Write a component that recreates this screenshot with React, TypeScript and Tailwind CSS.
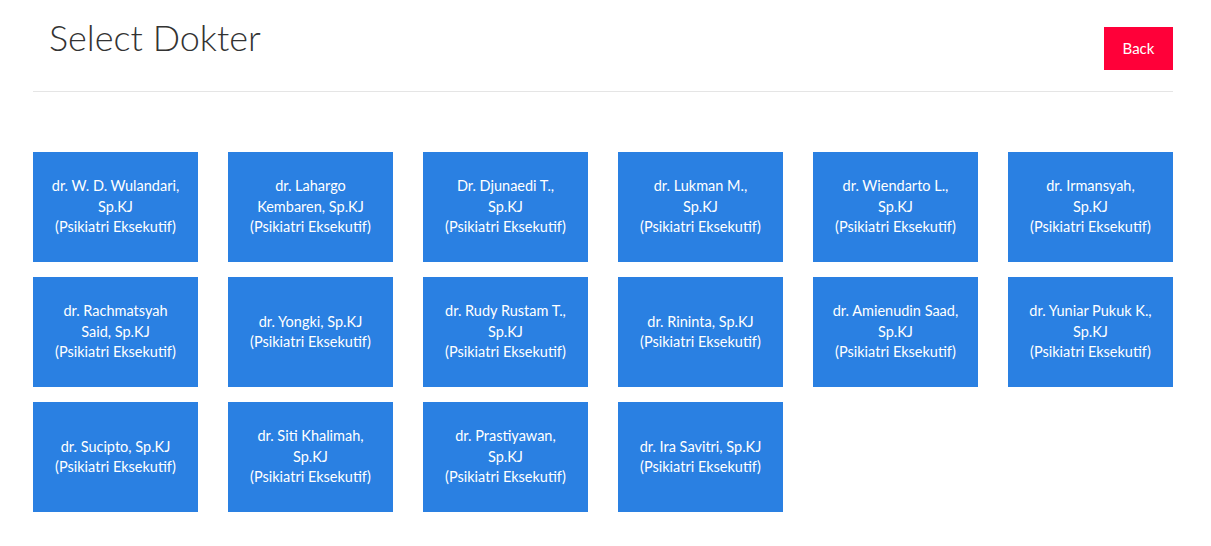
import React from "react";

const doctors: string[][] = [
  ["dr. W. D. Wulandari,", "Sp.KJ"],
  ["dr. Lahargo", "Kembaren, Sp.KJ"],
  ["Dr. Djunaedi T.,", "Sp.KJ"],
  ["dr. Lukman M.,", "Sp.KJ"],
  ["dr. Wiendarto L.,", "Sp.KJ"],
  ["dr. Irmansyah,", "Sp.KJ"],
  ["dr. Rachmatsyah", "Said, Sp.KJ"],
  ["dr. Yongki, Sp.KJ"],
  ["dr. Rudy Rustam T.,", "Sp.KJ"],
  ["dr. Rininta, Sp.KJ"],
  ["dr. Amienudin Saad,", "Sp.KJ"],
  ["dr. Yuniar Pukuk K.,", "Sp.KJ"],
  ["dr. Sucipto, Sp.KJ"],
  ["dr. Siti Khalimah,", "Sp.KJ"],
  ["dr. Prastiyawan,", "Sp.KJ"],
  ["dr. Ira Savitri, Sp.KJ"],
];

export default function App() {
  return (
    <div
      className="min-h-[546px] w-full bg-white"
      style={{ fontFamily: "Lato, 'Noto Sans', sans-serif" }}
    >
      <div className="mx-[33px] w-[1140px] pt-[14px]">
        <div className="flex items-start justify-between border-b border-[#e5e5e5] pb-[21px]">
          <h1 className="ml-[16px] mt-0 text-[36px] font-light leading-[46px] text-[#333]">
            Select Dokter
          </h1>
          <button className="mt-[13px] h-[43px] w-[69px] bg-[#ff0039] text-[15px] text-white">
            Back
          </button>
        </div>
        <div className="mt-[60px] grid grid-cols-6 gap-x-[30px] gap-y-[15px]">
          {doctors.map((d, i) => (
            <div
              key={i}
              className="flex h-[110px] flex-col items-center justify-center bg-[#2a80e2] text-center text-[14.5px] leading-[20.5px] text-white"
            >
              {d.map((l, j) => (
                <span key={j} className="whitespace-nowrap">
                  {l}
                </span>
              ))}
              <span className="whitespace-nowrap">(Psikiatri Eksekutif)</span>
            </div>
          ))}
        </div>
      </div>
    </div>
  );
}
